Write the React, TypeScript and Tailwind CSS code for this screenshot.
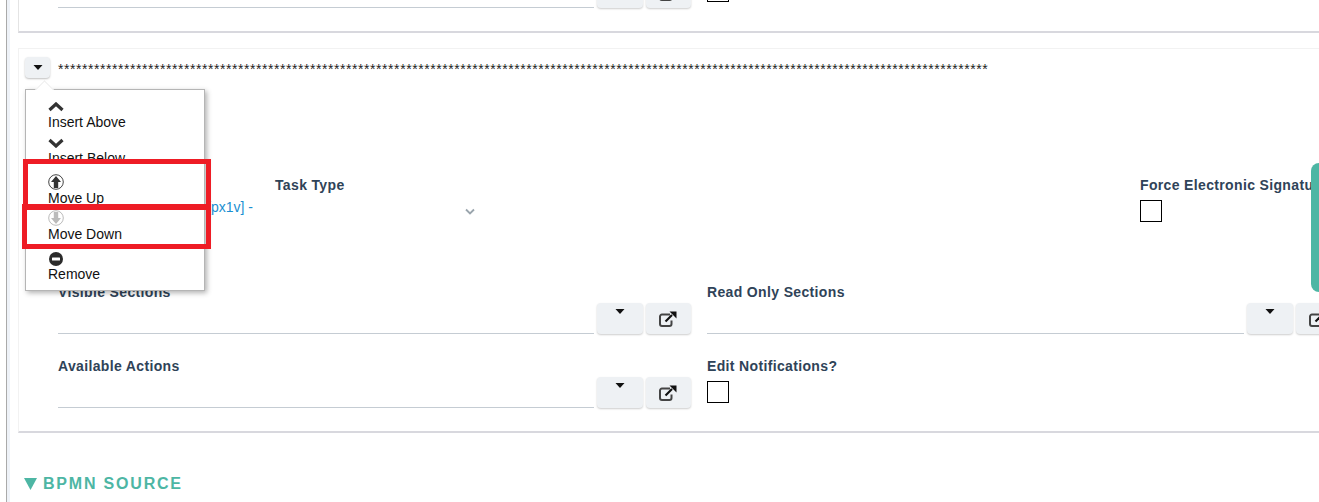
import React from 'react';

const font = { fontFamily: '"Liberation Sans", Arial, sans-serif' };

function Caret({ className = '' }: { className?: string }) {
  return (
    <svg width="10" height="5" viewBox="0 0 10 5" className={className}>
      <path d="M0.5 0h9L5 5z" fill="#111" />
    </svg>
  );
}

function ExternalIcon() {
  return (
    <svg width="18" height="16" viewBox="0 0 18 16" fill="none" className="-ml-[1px]">
      <path d="M11 3.5H3a2 2 0 0 0-2 2V13a2 2 0 0 0 2 2h7.5a2 2 0 0 0 2-2V9.5" stroke="#444" strokeWidth="2" />
      <path d="M6.5 10.5 13 4" stroke="#111" strokeWidth="2.2" />
      <path d="M10.5 0.5H17.5V7.5z" fill="#111" />
    </svg>
  );
}

function PickerButtons() {
  return (
    <div className="flex gap-[3px]">
      <div className="flex h-[31px] w-[46px] justify-center rounded-sm bg-[#eef1f4] pt-[6px] shadow-[0_1px_2px_rgba(0,0,0,0.2)]">
        <Caret />
      </div>
      <div className="flex h-[31px] w-[45px] items-center justify-center rounded-sm bg-[#eef1f4] shadow-[0_1px_2px_rgba(0,0,0,0.2)]">
        <ExternalIcon />
      </div>
    </div>
  );
}

function Label({ children }: { children: React.ReactNode }) {
  return <div className="text-[14px] leading-[16px] font-bold tracking-[0.35px] whitespace-nowrap text-[#2f4358]">{children}</div>;
}

function Checkbox() {
  return <div className="h-[22px] w-[22px] border border-black bg-white" />;
}

function PickerField({ label, lineClass }: { label: string; lineClass: string }) {
  return (
    <div className="w-[634px] shrink-0">
      <Label>{label}</Label>
      <div className="mt-[3px] flex items-end gap-[3px]">
        <div className={`h-[31px] border-b border-[#c5ccd3] ${lineClass}`} />
        <PickerButtons />
      </div>
    </div>
  );
}

function MenuItem({ icon, label, className = '' }: { icon: React.ReactNode; label: string; className?: string }) {
  return (
    <div className={`flex h-[36px] flex-col ${className}`}>
      <div className="flex h-[18px] items-end">{icon}</div>
      <div className="text-[14px] leading-[16px] whitespace-nowrap text-[#111]">{label}</div>
    </div>
  );
}

function ActionMenu() {
  return (
    <div className="absolute top-[40px] left-[6px] z-10 h-[202px] w-[180px] border border-[#b5b5b5] bg-white pt-[6px] pl-[22px] shadow-[2px_2px_5px_rgba(0,0,0,0.3)]">
      <div className="absolute -top-[7px] left-[12px] h-[13px] w-[13px] rotate-45 border-t border-l border-[#eeeeee] bg-white" />
      <div className="relative">
        <MenuItem
          label="Insert Above"
          icon={
            <svg width="16" height="10" viewBox="0 0 16 10" className="mb-[2px]">
              <path d="M1.5 8 8 2l6.5 6" fill="none" stroke="#333" strokeWidth="3.2" />
            </svg>
          }
        />
        <MenuItem
          label="Insert Below"
          icon={
            <svg width="16" height="10" viewBox="0 0 16 10" className="mb-[2px]">
              <path d="M1.5 2 8 8l6.5-6" fill="none" stroke="#333" strokeWidth="3.2" />
            </svg>
          }
        />
        <MenuItem
          label="Move Up"
          className="mt-[4px]"
          icon={
            <svg width="16" height="16" viewBox="0 0 16 16">
              <circle cx="8" cy="8" r="7.3" fill="none" stroke="#444" />
              <path d="M8 2 13 8H10.2V14H5.8V8H3z" fill="#333" />
            </svg>
          }
        />
        <MenuItem
          label="Move Down"
          icon={
            <svg width="16" height="16" viewBox="0 0 16 16">
              <circle cx="8" cy="8" r="7.3" fill="none" stroke="#bbb" />
              <path d="M8 14 13 8H10.2V2H5.8V8H3z" fill="#bbb" />
            </svg>
          }
        />
        <MenuItem
          label="Remove"
          className="mt-[4px]"
          icon={
            <svg width="16" height="14" viewBox="0 0 14 14">
              <circle cx="7" cy="7" r="7" fill="#2b2b2b" />
              <rect x="3" y="5.5" width="8" height="3" rx="0.5" fill="#fff" />
            </svg>
          }
        />
      </div>
    </div>
  );
}

export default function App() {
  return (
    <div className="relative h-[502px] w-[1319px] overflow-hidden bg-white" style={font}>
      <div className="ml-[6px] h-full border-l border-[#aaaaaa]">
        <div className="h-full border-l-[3px] border-[#eef2f8] pl-[8px]">
          {/* card cut off by the top of the page */}
          <div className="mr-[-20px] h-[33px] border-l border-[#e4e4e4] border-b-2 border-b-[#d8d8de] pl-[39px]">
            <div className="flex -translate-y-[23px] items-end">
              <div className="flex w-[649px] shrink-0 items-end gap-[3px]">
                <div className="h-[31px] w-[536px] border-b border-[#c5ccd3]" />
                <PickerButtons />
              </div>
              <div className="mb-[6px]">
                <Checkbox />
              </div>
            </div>
          </div>

          <div className="relative mt-[15px] mr-[-20px] h-[385px] border-t border-l border-[#f2f2f2] border-b-2 border-b-[#d8d8de]">
            <div className="absolute top-[8px] left-[6px] flex h-[21px] w-[25px] items-center justify-center rounded-sm bg-[#eef1f4] shadow-[0_1px_2px_rgba(0,0,0,0.25)]">
              <Caret />
            </div>
            <ActionMenu />

            <div className="pt-[12px] pl-[39px]">
              <div className="text-[14px] leading-[16px] tracking-[0.554px] whitespace-nowrap text-[#222]">
                {'*'.repeat(155)}
              </div>

              <div className="mt-[100px] flex">
                <div className="flex w-[217px] shrink-0 justify-end pt-[22px] pr-[22px]">
                  <span className="text-[14px] leading-[16px] whitespace-nowrap text-[#1a8fd1]">[px1v] -</span>
                </div>
                <div className="w-[865px] shrink-0">
                  <Label>Task Type</Label>
                  <div className="mt-[14px] flex w-[200px] justify-end">
                    <svg width="10" height="7" viewBox="0 0 10 7" className="mt-[1px]">
                      <path d="M1 1.5 5 5.5l4-4" fill="none" stroke="#9aa5ad" strokeWidth="1.8" />
                    </svg>
                  </div>
                </div>
                <div>
                  <Label>Force Electronic Signature</Label>
                  <div className="mt-[7px]">
                    <Checkbox />
                  </div>
                </div>
              </div>

              <div className="mt-[62px] flex gap-[15px]">
                <PickerField label="Visible Sections" lineClass="w-[536px]" />
                <PickerField label="Read Only Sections" lineClass="w-[538px]" />
              </div>

              <div className="mt-[24px] flex gap-[15px]">
                <PickerField label="Available Actions" lineClass="w-[536px]" />
                <div>
                  <Label>Edit Notifications?</Label>
                  <div className="mt-[7px]">
                    <Checkbox />
                  </div>
                </div>
              </div>
            </div>
          </div>

          <div className="mt-[42px] flex items-center gap-[6px] pl-[6px]">
            <svg width="13" height="12" viewBox="0 0 13 12">
              <path d="M0 0h13L6.5 12z" fill="#4db6a4" />
            </svg>
            <span className="text-[16px] leading-[18px] font-bold tracking-[1.8px] text-[#4db6a4]">BPMN SOURCE</span>
          </div>
        </div>
      </div>

      {/* teal tab on the right edge */}
      <div className="absolute top-[163px] right-0 h-[129px] w-[8px] rounded-l-lg bg-[#4db6a4]" />

      {/* red annotation boxes */}
      <div className="absolute top-[159px] left-[23px] z-20 h-[51px] w-[188px] border-[5px] border-[#ee1c25]" />
      <div className="absolute top-[204px] left-[22px] z-20 h-[45px] w-[189px] border-[5px] border-[#ee1c25]" />
    </div>
  );
}
